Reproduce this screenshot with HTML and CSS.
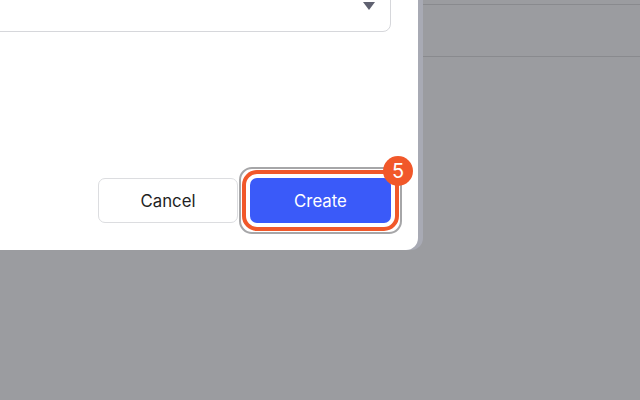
FILE: index.html
```html
<!DOCTYPE html>
<html>
<head>
<meta charset="utf-8">
<link rel="stylesheet" href="styles.css">
</head>
<body>
<div class="page">
  <div class="page-main"></div>
  <div class="page-side">
    <div class="side-row first"></div>
    <div class="side-row"></div>
  </div>
</div>
<div class="dialog">
  <div class="field">
    <div class="select">
      <span class="select-arrow"></span>
    </div>
  </div>
  <div class="actions">
    <button class="btn btn-cancel">Cancel</button>
    <div class="highlight">
      <button class="btn btn-create">Create</button>
      <span class="badge">5</span>
    </div>
  </div>
</div>
</body>
</html>
```
FILE: styles.css
```css
html, body {
  margin: 0;
  padding: 0;
}
body {
  width: 640px;
  height: 400px;
  overflow: hidden;
  background: #9b9ca0;
  font-family: Inter, "Noto Sans", sans-serif;
  position: relative;
}
.page {
  display: flex;
  height: 400px;
}
.page-main {
  width: 423px;
}
.page-side {
  flex: 1;
}
.side-row {
  height: 51px;
  border-bottom: 1px solid #898a8e;
}
.side-row.first {
  height: 4px;
}
.dialog {
  position: absolute;
  left: -300px;
  top: -120px;
  width: 718px;
  height: 370px;
  background: #ffffff;
  border-radius: 0 0 12px 0;
  box-shadow: 5px 0 0 0 #a8aab4;
  box-sizing: border-box;
  padding: 0 27px 0 27px;
  display: flex;
  flex-direction: column;
}
.field {
  padding-top: 104px;
}
.select {
  height: 46px;
  border: 1px solid #d6d7db;
  border-radius: 8px;
  position: relative;
}
.select-arrow {
  position: absolute;
  right: 15px;
  top: 17px;
  width: 0;
  height: 0;
  border-left: 6px solid transparent;
  border-right: 6px solid transparent;
  border-top: 8px solid #5f6170;
}
.actions {
  margin-top: 146px;
  display: flex;
  justify-content: flex-end;
  gap: 12px;
}
.btn {
  font-family: Inter, "Noto Sans", sans-serif;
  font-size: 16.8px;
  height: 45px;
  width: 141px;
  border-radius: 7px;
  box-sizing: border-box;
  cursor: pointer;
  padding: 0;
}
.btn-cancel {
  width: 140px;
  background: #ffffff;
  border: 1px solid #dcdde0;
  color: #1f1f24;
}
.highlight {
  position: relative;
  display: flex;
}
.btn-create {
  background: #3a5af9;
  border: none;
  color: #ffffff;
  outline: 4px solid #f1582a;
  outline-offset: 4px;
}
.highlight::before {
  content: "";
  position: absolute;
  left: -11px;
  top: -11px;
  right: -11px;
  bottom: -11px;
  border-radius: 13px;
  border: 2px solid #a6a6a8;
  pointer-events: none;
}
.badge {
  position: absolute;
  right: -22px;
  top: -22px;
  width: 30px;
  height: 30px;
  border-radius: 50%;
  background: #f1582a;
  color: #ffffff;
  font-size: 20px;
  display: flex;
  align-items: center;
  justify-content: center;
}
```
